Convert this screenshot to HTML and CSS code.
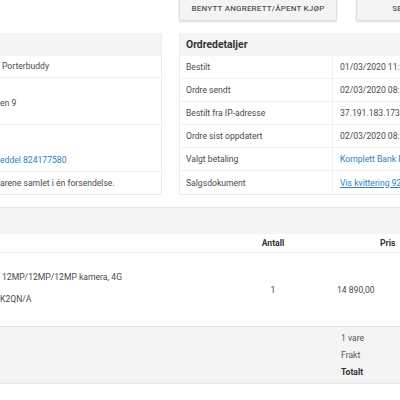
FILE: index.html
```html
<!DOCTYPE html>
<html lang="no">
<head>
<meta charset="utf-8">
<title>Ordre</title>
<link rel="stylesheet" href="styles.css">
</head>
<body>
<div class="page">
  <div class="actions">
    <button class="btn">BENYTT ANGRERETT/ÅPENT KJØP</button>
    <button class="btn">SEND HENVENDELSER</button>
  </div>

  <div class="panels">
    <section class="panel panel-left">
      <div class="panel-head"></div>
      <div class="lrow lrow-1"><span class="pad">Porterbuddy</span></div>
      <div class="lrow lrow-2">
        <div class="line">&nbsp;</div>
        <div class="line">en 9</div>
        <div class="line">&nbsp;</div>
      </div>
      <div class="lrow lrow-3">
        <div class="line link">&nbsp;</div>
        <div class="line link line-gap">eddel 824177580</div>
      </div>
      <div class="lrow lrow-4">arene samlet i én forsendelse.</div>
    </section>

    <section class="panel panel-right">
      <div class="panel-head head-title">Ordredetaljer</div>
      <div class="drow"><span class="lbl">Bestilt</span><span class="val">01/03/2020 11:32</span></div>
      <div class="drow"><span class="lbl">Ordre sendt</span><span class="val">02/03/2020 08:51</span></div>
      <div class="drow"><span class="lbl">Bestilt fra IP-adresse</span><span class="val">37.191.183.173</span></div>
      <div class="drow"><span class="lbl">Ordre sist oppdatert</span><span class="val">02/03/2020 08:51</span></div>
      <div class="drow"><span class="lbl">Valgt betaling</span><span class="val link">Komplett Bank Faktura</span></div>
      <div class="drow"><span class="lbl">Salgsdokument</span><span class="val link underline">Vis kvittering 923418</span></div>
    </section>
  </div>

  <section class="items">
    <div class="items-band"></div>
    <div class="items-grid items-head">
      <span class="c-name"></span>
      <span class="c-qty">Antall</span>
      <span class="c-price head-price">Pris</span>
    </div>
    <div class="items-grid items-row">
      <div class="c-name">
        <div class="prod-line prod-title">12MP/12MP/12MP kamera, 4G</div>
        <div class="prod-line prod-sku">K2QN/A</div>
      </div>
      <span class="c-qty">1</span>
      <span class="c-price">14 890,00</span>
    </div>
    <div class="items-foot">
      <div class="sum-line">1 vare</div>
      <div class="sum-line">Frakt</div>
      <div class="sum-line sum-total">Totalt</div>
    </div>
  </section>
</div>
</body>
</html>
```

FILE: styles.css
```css
* { box-sizing: border-box; }

html, body {
  margin: 0;
  padding: 0;
  background: #fff;
}

body {
  width: 400px;
  height: 400px;
  overflow: hidden;
  font-family: Roboto, "Liberation Sans", Arial, sans-serif;
  font-size: 8.6px;
  color: #4a4a4a;
}

.page {
  width: 520px;
}

/* top action buttons */
.actions {
  display: flex;
  gap: 19px;
  padding-left: 179px;
  margin-top: -9px;
}

.btn {
  flex: none;
  width: 158px;
  height: 30px;
  display: flex;
  align-items: flex-end;
  justify-content: center;
  padding: 0 0 6px;
  background: #f4f4f4;
  border: 1px solid #dedede;
  border-radius: 2px;
  box-shadow: 0 1px 2px rgba(0, 0, 0, 0.14);
  font-family: Roboto, "Liberation Sans", sans-serif;
  font-size: 8px;
  font-weight: 500;
  letter-spacing: 0.2px;
  line-height: 10px;
  white-space: nowrap;
  color: #555;
}

/* panels */
.panels {
  display: flex;
  gap: 17px;
  margin-top: 12px;
}

.panel {
  flex: none;
  border-bottom: 1px solid #e8e8e8;
}

.panel-left {
  width: 162px;
  border-right: 1px solid #ececec;
}

.panel-right {
  width: 320px;
  border-left: 1px solid #ececec;
}

.panel-head {
  height: 23px;
  background: #f4f4f4;
}

.head-title {
  display: flex;
  align-items: center;
  padding-left: 6px;
  font-size: 10.4px;
  font-weight: 700;
  color: #333;
}

.lrow {
  border-bottom: 1px solid #f0f0f0;
  white-space: nowrap;
  line-height: 15px;
}

.lrow:last-child { border-bottom: none; }

.lrow-1 {
  height: 22px;
  display: flex;
  align-items: center;
}

.lrow-1 .pad { padding-left: 2px; }

.lrow-2 {
  height: 47px;
  padding-top: 3px;
}

.lrow-3 {
  height: 47px;
  padding-top: 3px;
}

.line-gap { margin-top: 10px; }

.lrow-4 {
  height: 22px;
  display: flex;
  align-items: center;
}

.link { color: #2a80c6; }
.underline { text-decoration: underline; }

.drow {
  display: flex;
  height: 23px;
  border-bottom: 1px solid #f0f0f0;
  white-space: nowrap;
}

.drow:last-child { border-bottom: none; }

.lbl {
  flex: none;
  width: 152px;
  display: flex;
  align-items: center;
  padding-left: 6px;
}

.val {
  flex: 1;
  display: flex;
  align-items: center;
  padding-left: 7px;
  border-left: 1px solid #f0f0f0;
}

/* items */
.items {
  margin-top: 12px;
  border-top: 1px solid #e6e6e6;
}

.items-band {
  height: 26px;
  background: #f4f4f4;
}

.items-grid {
  display: grid;
  grid-template-columns: 248px 50px 1fr;
  white-space: nowrap;
}

.items-head {
  height: 19px;
  align-items: center;
  border-bottom: 1px solid #ececec;
  font-weight: 700;
  color: #333;
}

.c-qty { text-align: center; }
.c-price { padding-left: 39px; }
.head-price { padding-left: 82px; }

.items-row {
  height: 73px;
  align-items: center;
}

.items-row .c-name {
  align-self: start;
  padding-top: 17px;
}

.prod-line { line-height: 14px; }
.prod-title { padding-left: 2px; }
.prod-sku { margin-top: 8px; }

.items-foot {
  height: 58px;
  padding: 3px 0 0 341px;
  background: #f4f4f4;
  border-top: 1px solid #e6e6e6;
  border-bottom: 1px solid #e6e6e6;
}

.sum-line {
  line-height: 17px;
  color: #555;
}

.sum-total {
  font-weight: 700;
  color: #333;
}
```
